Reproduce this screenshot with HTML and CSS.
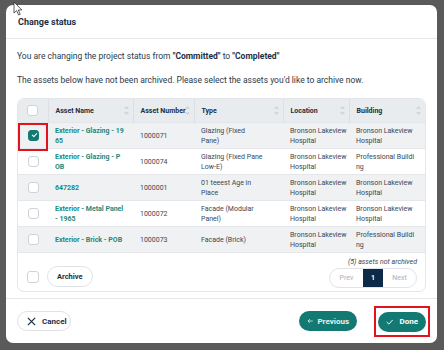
FILE: index.html
```html
<!DOCTYPE html>
<html lang="en">
<head>
    <meta charset="UTF-8">
    <meta name="viewport" content="width=device-width, initial-scale=1.0">
    <title>Change status</title>
    <link rel="stylesheet" href="styles.css">
</head>
<body>
    <svg class="cursor" width="10" height="15" viewBox="0 0 10 15">
        <path d="M1 1 L1 12 L3.6 9.6 L5.6 14 L7.2 13.3 L5.3 9 L8.8 9 Z" fill="#fff" stroke="#333" stroke-width="0.8"/>
    </svg>
    <div class="modal">
        <div class="modal-header">Change status</div>
        <div class="modal-body">
            <p>You are changing the project status from <b>"Committed"</b> to <b>"Completed"</b></p>
            <p>The assets below have not been archived. Please select the assets you'd like to archive now.</p>

            <div class="table-card">
                <table>
                    <colgroup>
                        <col style="width: 30px">
                        <col style="width: 85px">
                        <col style="width: 61px">
                        <col style="width: 89px">
                        <col style="width: 66px">
                        <col>
                    </colgroup>
                    <thead>
                        <tr>
                            <th class="col-check"><span class="check"></span></th>
                            <th>Asset Name<span class="sort"></span></th>
                            <th>Asset Number<span class="sort"></span></th>
                            <th>Type<span class="sort"></span></th>
                            <th>Location<span class="sort"></span></th>
                            <th>Building<span class="sort"></span></th>
                        </tr>
                    </thead>
                    <tbody>
                        <tr class="striped">
                            <td class="col-check"><span class="check checked"></span><span class="highlight"></span></td>
                            <td><a>Exterior - Glazing - 19<br>65</a></td>
                            <td>1000071</td>
                            <td>Glazing (Fixed<br>Pane)</td>
                            <td>Bronson Lakeview<br>Hospital</td>
                            <td>Bronson Lakeview<br>Hospital</td>
                        </tr>
                        <tr>
                            <td class="col-check"><span class="check"></span></td>
                            <td><a>Exterior - Glazing - P<br>OB</a></td>
                            <td>1000074</td>
                            <td>Glazing (Fixed Pane<br>Low-E)</td>
                            <td>Bronson Lakeview<br>Hospital</td>
                            <td>Professional Buildi<br>ng</td>
                        </tr>
                        <tr class="striped">
                            <td class="col-check"><span class="check"></span></td>
                            <td><a>647282</a></td>
                            <td>1000001</td>
                            <td>01 teeest Age in<br>Place</td>
                            <td>Bronson Lakeview<br>Hospital</td>
                            <td>Bronson Lakeview<br>Hospital</td>
                        </tr>
                        <tr>
                            <td class="col-check"><span class="check"></span></td>
                            <td><a>Exterior - Metal Panel<br>- 1965</a></td>
                            <td>1000072</td>
                            <td>Facade (Modular<br>Panel)</td>
                            <td>Bronson Lakeview<br>Hospital</td>
                            <td>Bronson Lakeview<br>Hospital</td>
                        </tr>
                        <tr class="striped">
                            <td class="col-check"><span class="check"></span></td>
                            <td><a>Exterior - Brick - POB</a></td>
                            <td>1000073</td>
                            <td>Facade (Brick)</td>
                            <td>Bronson Lakeview<br>Hospital</td>
                            <td>Professional Buildi<br>ng</td>
                        </tr>
                    </tbody>
                </table>
                <div class="table-footer">
                    <div class="footer-left">
                        <span class="check"></span>
                        <button class="pill-btn">Archive</button>
                    </div>
                    <div class="footer-right">
                        <div class="count">(5) assets not archived</div>
                        <div class="pager">
                            <span class="pager-item">Prev</span>
                            <span class="pager-item active">1</span>
                            <span class="pager-item">Next</span>
                        </div>
                    </div>
                </div>
            </div>
        </div>
        <div class="modal-footer">
            <button class="pill-btn cancel">
                <svg width="9" height="9" viewBox="0 0 10 10"><path d="M1 1 L9 9 M9 1 L1 9" stroke="#1c2f45" stroke-width="1.4" fill="none"/></svg>
                Cancel
            </button>
            <div class="footer-actions">
                <button class="teal-btn">
                    <svg width="8" height="8" viewBox="0 0 10 10"><path d="M9 5 H1.5 M4.5 2 L1.5 5 L4.5 8" stroke="#dfeeed" stroke-width="1.2" fill="none"/></svg>
                    Previous
                </button>
                <div class="done-wrap">
                    <button class="teal-btn done">
                        <svg width="10" height="8" viewBox="0 0 10 8"><path d="M1 4 L3.8 6.8 L9 1.2" stroke="#fff" stroke-width="1.3" fill="none"/></svg>
                        Done
                    </button>
                </div>
            </div>
        </div>
    </div>
</body>
</html>
```

FILE: styles.css
```css
body {
    margin: 0;
    width: 444px;
    height: 350px;
    background-color: #5a5a5a;
    font-family: Roboto, "Noto Sans", sans-serif;
    color: #2b3a4a;
    overflow: hidden;
    position: relative;
}

.cursor {
    position: absolute;
    left: 13px;
    top: 1px;
    z-index: 5;
}

.modal {
    position: absolute;
    left: 6px;
    top: 5px;
    width: 431px;
    height: 338px;
    background-color: #fff;
    border-radius: 7px;
    display: flex;
    flex-direction: column;
}

.modal-header {
    flex-shrink: 0;
    height: 33px;
    padding-left: 12px;
    display: flex;
    align-items: center;
    font-size: 9px;
    font-weight: 700;
    color: #1c2f45;
    border-bottom: 1px solid #e4e6e9;
}

.modal-body {
    padding: 0 11px;
    flex: 1;
}

.modal-body p {
    margin: 0;
    font-size: 8.5px;
    line-height: 10px;
}

.modal-body p:first-child {
    margin-top: 12px;
}

.modal-body p + p {
    margin-top: 14px;
}

.modal-body b {
    color: #1c2f45;
}

.table-card {
    margin-top: 13px;
    border: 1px solid #e4e6e9;
    border-radius: 7px;
    overflow: hidden;
}

table {
    width: 100%;
    border-collapse: collapse;
    table-layout: fixed;
    font-size: 7px;
}

th {
    background-color: #e9ecef;
    height: 23px;
    text-align: left;
    font-weight: 700;
    color: #1c2f45;
    padding: 0 0 0 7px;
    border-left: 1px solid #dcdfe3;
    position: relative;
    white-space: nowrap;
}

th:first-child {
    border-left: none;
}

.col-check {
    padding: 0;
    text-align: center;
    position: relative;
}

.sort {
    position: absolute;
    right: 4px;
    top: 8px;
    width: 4px;
    height: 7px;
}

.sort::before,
.sort::after {
    content: "";
    position: absolute;
    left: 0;
    width: 2px;
    height: 2px;
    border-left: 1px solid #c3c8ce;
    border-top: 1px solid #c3c8ce;
}

.sort::before {
    top: 0;
    transform: rotate(45deg);
}

.sort::after {
    bottom: 0;
    transform: rotate(225deg);
}

td {
    height: 25px;
    padding: 0 2px 0 7px;
    line-height: 10px;
    color: #3a4756;
    border-top: 1px solid #e4e6e9;
    vertical-align: middle;
    white-space: nowrap;
    overflow: hidden;
}

td.col-check {
    padding: 0;
    overflow: visible;
}

tr.striped td {
    background-color: #eff1f3;
}

td a {
    color: #1b8a80;
    font-weight: 700;
}

.check {
    display: inline-block;
    width: 11px;
    height: 11px;
    border: 1px solid #cfd3d8;
    border-radius: 3px;
    background-color: #fff;
    vertical-align: middle;
    box-sizing: border-box;
}

.check.checked {
    background-color: #137a73;
    border-color: #137a73;
    position: relative;
}

.check.checked::after {
    content: "";
    position: absolute;
    left: 3px;
    top: 2px;
    width: 4px;
    height: 2px;
    border-left: 1.3px solid #fff;
    border-bottom: 1.3px solid #fff;
    transform: rotate(-45deg);
}

.highlight {
    position: absolute;
    left: 0;
    top: 0;
    width: 30px;
    height: 28px;
    border: 2px solid #e0141e;
    box-sizing: border-box;
}

.table-footer {
    border-top: 1px solid #e4e6e9;
    height: 35px;
    display: flex;
    justify-content: space-between;
    align-items: flex-end;
    padding: 0 8px 3px 9px;
}

.footer-left {
    display: flex;
    align-items: center;
    gap: 8px;
    margin-bottom: 1px;
}

.footer-left .check {
    width: 12px;
    height: 12px;
}

.pill-btn {
    font-family: Roboto, "Noto Sans", sans-serif;
    font-size: 7.5px;
    font-weight: 700;
    color: #1c2f45;
    background-color: #fff;
    border: 1px solid #dfe2e6;
    border-radius: 11px;
    height: 21px;
    padding: 0 9px;
    display: flex;
    align-items: center;
    gap: 6px;
}

.footer-right {
    display: flex;
    flex-direction: column;
    align-items: flex-end;
    gap: 2px;
}

.count {
    font-size: 7px;
    font-style: italic;
    color: #3a4756;
}

.pager {
    display: flex;
    border: 1px solid #e0e3e7;
    border-radius: 10px;
    overflow: hidden;
    height: 18px;
}

.pager-item {
    font-size: 7px;
    color: #a9b1ba;
    display: flex;
    align-items: center;
    justify-content: center;
    width: 33px;
}

.pager-item.active {
    width: 20px;
    background-color: #0d2b48;
    color: #fff;
    font-weight: 700;
}

.modal-footer {
    flex-shrink: 0;
    height: 44px;
    border-top: 1px solid #e4e6e9;
    display: flex;
    align-items: center;
    justify-content: space-between;
    padding: 0 10px 0 11px;
}

.cancel {
    width: 54px;
    height: 20px;
    padding: 0 0 0 9px;
    font-size: 8px;
}

.footer-actions {
    display: flex;
    align-items: center;
    gap: 17px;
}

.teal-btn {
    font-family: Roboto, "Noto Sans", sans-serif;
    font-size: 8px;
    font-weight: 700;
    color: #e4f1f0;
    background-color: #137a73;
    border: none;
    border-radius: 10px;
    height: 20px;
    padding: 0 8px;
    display: flex;
    align-items: center;
    gap: 4px;
    width: 58px;
    justify-content: center;
}

.done-wrap {
    border: 2px solid #e0141e;
    padding: 4px 2px 3px 2px;
    margin-right: -3px;
}

.teal-btn.done {
    width: 48px;
    color: #fff;
    gap: 6px;
}
```
